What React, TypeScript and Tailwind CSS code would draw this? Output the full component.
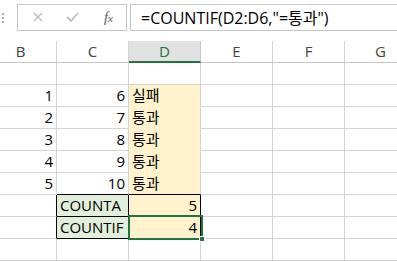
import React from 'react';

const font = { fontFamily: '"Open Sans", "Noto Sans CJK KR", sans-serif' };

const cols = ['B', 'C', 'D', 'E', 'F', 'G'];

type Cell = { text?: string; align?: 'l' | 'r'; cls?: string };

const rows: Cell[][] = [
  [{}, {}, {}, {}, {}, {}],
  [{ text: '1', align: 'r' }, { text: '6', align: 'r' }, { text: '실패', cls: 'bg-[#fff2cc] border-b-[#fff2cc]' }, {}, {}, {}],
  [{ text: '2', align: 'r' }, { text: '7', align: 'r' }, { text: '통과', cls: 'bg-[#fff2cc] border-b-[#fff2cc]' }, {}, {}, {}],
  [{ text: '3', align: 'r' }, { text: '8', align: 'r' }, { text: '통과', cls: 'bg-[#fff2cc] border-b-[#fff2cc]' }, {}, {}, {}],
  [{ text: '4', align: 'r' }, { text: '9', align: 'r' }, { text: '통과', cls: 'bg-[#fff2cc] border-b-[#fff2cc]' }, {}, {}, {}],
  [{ text: '5', align: 'r' }, { text: '10', align: 'r', cls: 'border-b-black' }, { text: '통과', cls: 'bg-[#fff2cc] border-b-black' }, {}, {}, {}],
  [{ cls: 'border-r-black' }, { text: 'COUNTA', cls: 'bg-[#e2efda] border-r-black border-b-black' }, { text: '5', align: 'r', cls: 'bg-[#fff2cc] border-r-black border-b-black' }, {}, {}, {}],
  [{ cls: 'border-r-black' }, { text: 'COUNTIF', cls: 'bg-[#e2efda] border-r-black border-b-black' }, { text: '4', align: 'r', cls: 'bg-[#fff2cc] border-r-black border-b-black' }, {}, {}, {}],
  [{}, {}, {}, {}, {}, {}],
];

export default function App() {
  return (
    <div className="relative w-[397px] h-[261px] overflow-hidden bg-white text-[15px] text-black" style={font}>
      {/* formula bar */}
      <div className="flex h-[41px] items-start pt-[4px]">
        <div className="flex w-[17px] h-[27px] flex-col items-start justify-center gap-[2px] pl-[2px]">
          <span className="block w-[2px] h-[2px] bg-[#b0b0b0]" />
          <span className="block w-[2px] h-[2px] bg-[#b0b0b0]" />
          <span className="block w-[2px] h-[2px] bg-[#b0b0b0]" />
        </div>
        <div className="flex h-[27px] w-[110px] items-center border border-[#c6c6c6]">
          <svg width="34" height="25" viewBox="0 0 34 25" className="ml-[13px]">
            <path d="M3 8 L11 16 M11 8 L3 16" stroke="#bdbdbd" strokeWidth="1.3" fill="none" />
          </svg>
          <svg width="34" height="25" viewBox="0 0 34 25" className="-ml-[1px]">
            <path d="M3 12 L7 16 L14 8" stroke="#bdbdbd" strokeWidth="1.8" fill="none" />
          </svg>
          <span className="ml-[6px] italic text-[14px] text-[#555]" style={{ fontFamily: '"Liberation Serif", serif' }}>
            f<span className="text-[11px]">x</span>
          </span>
        </div>
        <div className="ml-[3px] flex h-[27px] flex-1 items-center border border-r-0 border-[#c6c6c6] pl-[10px] text-[16px]">
          =COUNTIF(D2:D6,"=통과")
        </div>
      </div>

      {/* grid */}
      <div className="ml-[-15px] grid grid-cols-[72px_72px_72px_72px_72px_72px]">
        {cols.map((c) => (
          <div
            key={c}
            className={
              c === 'D'
                ? 'flex h-[22px] items-center justify-center bg-[#e1e1e1] border-r border-[#c6c6c6] border-b-2 border-b-[#217346] text-[#217346]'
                : 'flex h-[22px] items-center justify-center border-r border-[#d4d4d4] border-b border-b-[#c6c6c6] text-[#444]'
            }
          >
            {c}
          </div>
        ))}
        {rows.map((r, ri) =>
          r.map((cell, ci) => (
            <div
              key={ri + '-' + ci}
              className={
                'flex h-[22px] items-center overflow-hidden whitespace-nowrap border-r border-b border-[#d4d4d4] px-[3px] ' +
                (cell.align === 'r' ? 'justify-end ' : 'justify-start ') +
                (cell.cls ?? '')
              }
            >
              {cell.text}
            </div>
          ))
        )}
      </div>

      {/* selection on D8 */}
      <div className="absolute left-[128px] top-[215px] w-[75px] h-[25px] border-2 border-[#217346]" />
      <div className="absolute left-[199px] top-[236px] w-[6px] h-[6px] bg-[#217346] border border-white" />
    </div>
  );
}
